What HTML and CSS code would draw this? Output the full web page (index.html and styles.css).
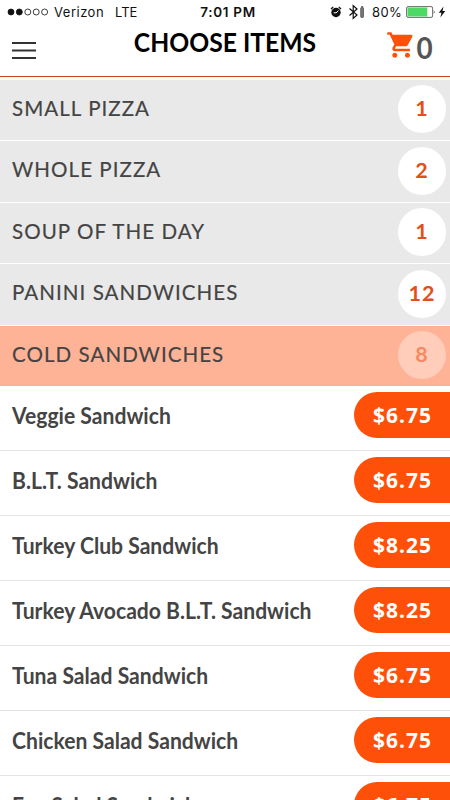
FILE: index.html
```
<!DOCTYPE html>
<html lang="en">
<head>
    <meta charset="UTF-8">
    <meta name="viewport" content="width=device-width, initial-scale=1.0">
    <title>Choose Items</title>
    <link rel="stylesheet" href="styles.css">
</head>
<body>
    <div class="status-bar">
        <div class="carrier">
            <svg class="signal" width="42" height="8" viewBox="0 0 42 8">
                <g fill="#111" stroke="#111" stroke-width="0.8">
                    <circle cx="4" cy="4" r="3"/>
                    <circle cx="12.3" cy="4" r="3"/>
                    <g fill="none">
                        <circle cx="20.8" cy="4" r="3"/>
                        <circle cx="29.2" cy="4" r="3"/>
                        <circle cx="37.6" cy="4" r="3"/>
                    </g>
                </g>
            </svg>
            <span class="network">Verizon</span>
            <span>LTE</span>
        </div>
        <div class="time">7:01 PM</div>
        <div class="indicators">
            <svg width="12" height="12" viewBox="0 0 12 12">
                <circle cx="6" cy="6.5" r="4.7" fill="#111"/>
                <path d="M1 3 L3.2 1 M11 3 L8.8 1" stroke="#111" stroke-width="1.3"/>
                <path d="M6 7 L8.4 4.6 M6.2 6.8 H3.6" stroke="#fff" stroke-width="1"/>
            </svg>
            <svg class="bluetooth" width="18" height="16" viewBox="0 0 18 16">
                <path d="M1.5 4.5 L9 11 L5.2 14.5 V1.5 L9 5 L1.5 11.5" fill="none" stroke="#111" stroke-width="1.2"/>
                <rect x="12.7" y="3.5" width="2.8" height="10" rx="0.8" fill="#777" stroke="#444" stroke-width="0.7"/>
                <rect x="13.3" y="2" width="1.6" height="1.4" fill="#555"/>
            </svg>
            <span class="percent">80%</span>
            <svg class="battery" width="30" height="12" viewBox="0 0 30 12">
                <rect x="0.6" y="0.6" width="26" height="10.8" rx="1.5" fill="#fff" stroke="#444" stroke-width="0.8"/>
                <rect x="1.5" y="1.5" width="19.8" height="9" fill="#4cd964"/>
                <path d="M27.8 4 Q29.4 6 27.8 8 Z" fill="#222"/>
            </svg>
            <svg width="8" height="12" viewBox="0 0 8 12">
                <path d="M5.5 0.5 L0.8 6.7 H3.5 L2.3 11.5 L7.3 5 H4.5 Z" fill="#111"/>
            </svg>
        </div>
    </div>

    <header class="header">
        <svg class="menu" width="24" height="18" viewBox="0 0 24 18">
            <path d="M0 1 H24 M0 8.5 H24 M0 16 H24" stroke="#333" stroke-width="2"/>
        </svg>
        <h1>CHOOSE ITEMS</h1>
        <div class="cart">
            <svg width="27" height="26" viewBox="0.8 1.8 21.4 20.4" preserveAspectRatio="none">
                <path fill="#ff500a" d="M7 18c-1.1 0-1.99.9-1.99 2S5.9 22 7 22s2-.9 2-2-.9-2-2-2zM1 2v2h2l3.6 7.59-1.35 2.45c-.16.28-.25.61-.25.96 0 1.1.9 2 2 2h12v-2H7.42c-.14 0-.25-.11-.25-.25l.03-.12.9-1.63h7.45c.75 0 1.41-.41 1.75-1.03l3.58-6.49c.08-.14.12-.31.12-.48 0-.55-.45-1-1-1H5.21l-.94-2H1zm16 16c-1.1 0-1.99.9-1.99 2s.89 2 1.99 2 2-.9 2-2-.9-2-2-2z"/>
            </svg>
            <span class="cart-count">0</span>
        </div>
    </header>

    <div class="categories">
        <div class="category"><span class="name">SMALL PIZZA</span><span class="count">1</span></div>
        <div class="category"><span class="name">WHOLE PIZZA</span><span class="count">2</span></div>
        <div class="category"><span class="name">SOUP OF THE DAY</span><span class="count">1</span></div>
        <div class="category"><span class="name">PANINI SANDWICHES</span><span class="count">12</span></div>
        <div class="category active"><span class="name">COLD SANDWICHES</span><span class="count">8</span></div>
    </div>

    <div class="items">
        <div class="item"><span class="name">Veggie Sandwich</span><span class="price">$6.75</span></div>
        <div class="item"><span class="name">B.L.T. Sandwich</span><span class="price">$6.75</span></div>
        <div class="item"><span class="name">Turkey Club Sandwich</span><span class="price">$8.25</span></div>
        <div class="item"><span class="name">Turkey Avocado B.L.T. Sandwich</span><span class="price">$8.25</span></div>
        <div class="item"><span class="name">Tuna Salad Sandwich</span><span class="price">$6.75</span></div>
        <div class="item"><span class="name">Chicken Salad Sandwich</span><span class="price">$6.75</span></div>
        <div class="item"><span class="name">Egg Salad Sandwich</span><span class="price">$6.75</span></div>
    </div>
</body>
</html>
```

FILE: styles.css
```
* {
    box-sizing: border-box;
}
body {
    margin: 0;
    height: 800px;
    overflow: hidden;
    background-color: #fff;
    font-family: Lato, sans-serif;
    color: #444;
}
.status-bar {
    display: grid;
    grid-template-columns: 183px 76px 1fr;
    align-items: center;
    height: 24px;
    padding-left: 7px;
    font-family: Inter, sans-serif;
    font-size: 13px;
    color: #111;
}
.carrier, .indicators {
    display: flex;
    align-items: center;
}
.network {
    margin: 0 11px 0 5px;
    letter-spacing: 0.5px;
}
.time {
    text-align: center;
    font-weight: 600;
    font-size: 13.5px;
    letter-spacing: 0.7px;
}
.indicators {
    justify-content: flex-end;
    padding-right: 4px;
}
.bluetooth {
    margin-left: 6px;
}
.percent {
    margin: 0 4px 0 6px;
    letter-spacing: 0.3px;
}
.battery {
    margin-right: 2px;
}
.header {
    display: grid;
    grid-template-columns: 80px 1fr 80px;
    height: 53px;
    border-bottom: 1px solid #c8451a;
}
.menu {
    margin: 18px 0 0 12px;
}
h1 {
    margin: 3px 0 0;
    font-size: 26px;
    line-height: 30px;
    font-weight: bold;
    text-align: center;
    white-space: nowrap;
    color: #000;
    transform: scaleX(0.95);
}
.cart {
    display: flex;
    align-items: flex-start;
    padding: 8px 0 0 17px;
}
.cart-count {
    margin-left: 2px;
    font-size: 30px;
    line-height: 31px;
    font-weight: bold;
    color: #555;
    transform: scaleX(0.93);
}
.categories {
    padding-top: 2.5px;
    background-color: #fffaf5;
}
.category {
    display: flex;
    align-items: center;
    justify-content: space-between;
    height: 61.5px;
    padding: 0 4.5px 4px 12px;
    border-bottom: 1.5px solid #fff;
    background-color: #e9e9e9;
}
.category .name {
    margin-top: -1px;
    font-size: 22px;
    letter-spacing: 1.1px;
    -webkit-text-stroke: 0.2px #444;
    transform: scaleX(0.935);
    transform-origin: left;
}
.count {
    width: 48px;
    height: 48px;
    margin-top: 3px;
    border-radius: 50%;
    background-color: #fff;
    font-size: 21.5px;
    font-weight: bold;
    line-height: 46px;
    letter-spacing: 1px;
    text-indent: 1px;
    text-align: center;
    color: #e2501a;
}
.category.active {
    height: 60px;
    border-bottom: none;
    background-color: #ffb396;
}
.active .count {
    background-color: #ffcdb9;
    color: #f58a62;
}
.item {
    display: flex;
    align-items: center;
    justify-content: space-between;
    height: 65px;
    padding: 0 0 5px 12px;
    border-bottom: 1.5px solid #e3e3e3;
}
.item .name {
    font-size: 22px;
    font-weight: bold;
    white-space: nowrap;
    transform: scaleX(0.96);
    transform-origin: left;
}
.price {
    width: 96px;
    height: 46px;
    padding-left: 19px;
    border-radius: 23px 0 0 23px;
    background-color: #ff500a;
    font-family: "Noto Sans", sans-serif;
    font-size: 21px;
    font-weight: bold;
    line-height: 46px;
    letter-spacing: 1px;
    color: #fff;
}
```
